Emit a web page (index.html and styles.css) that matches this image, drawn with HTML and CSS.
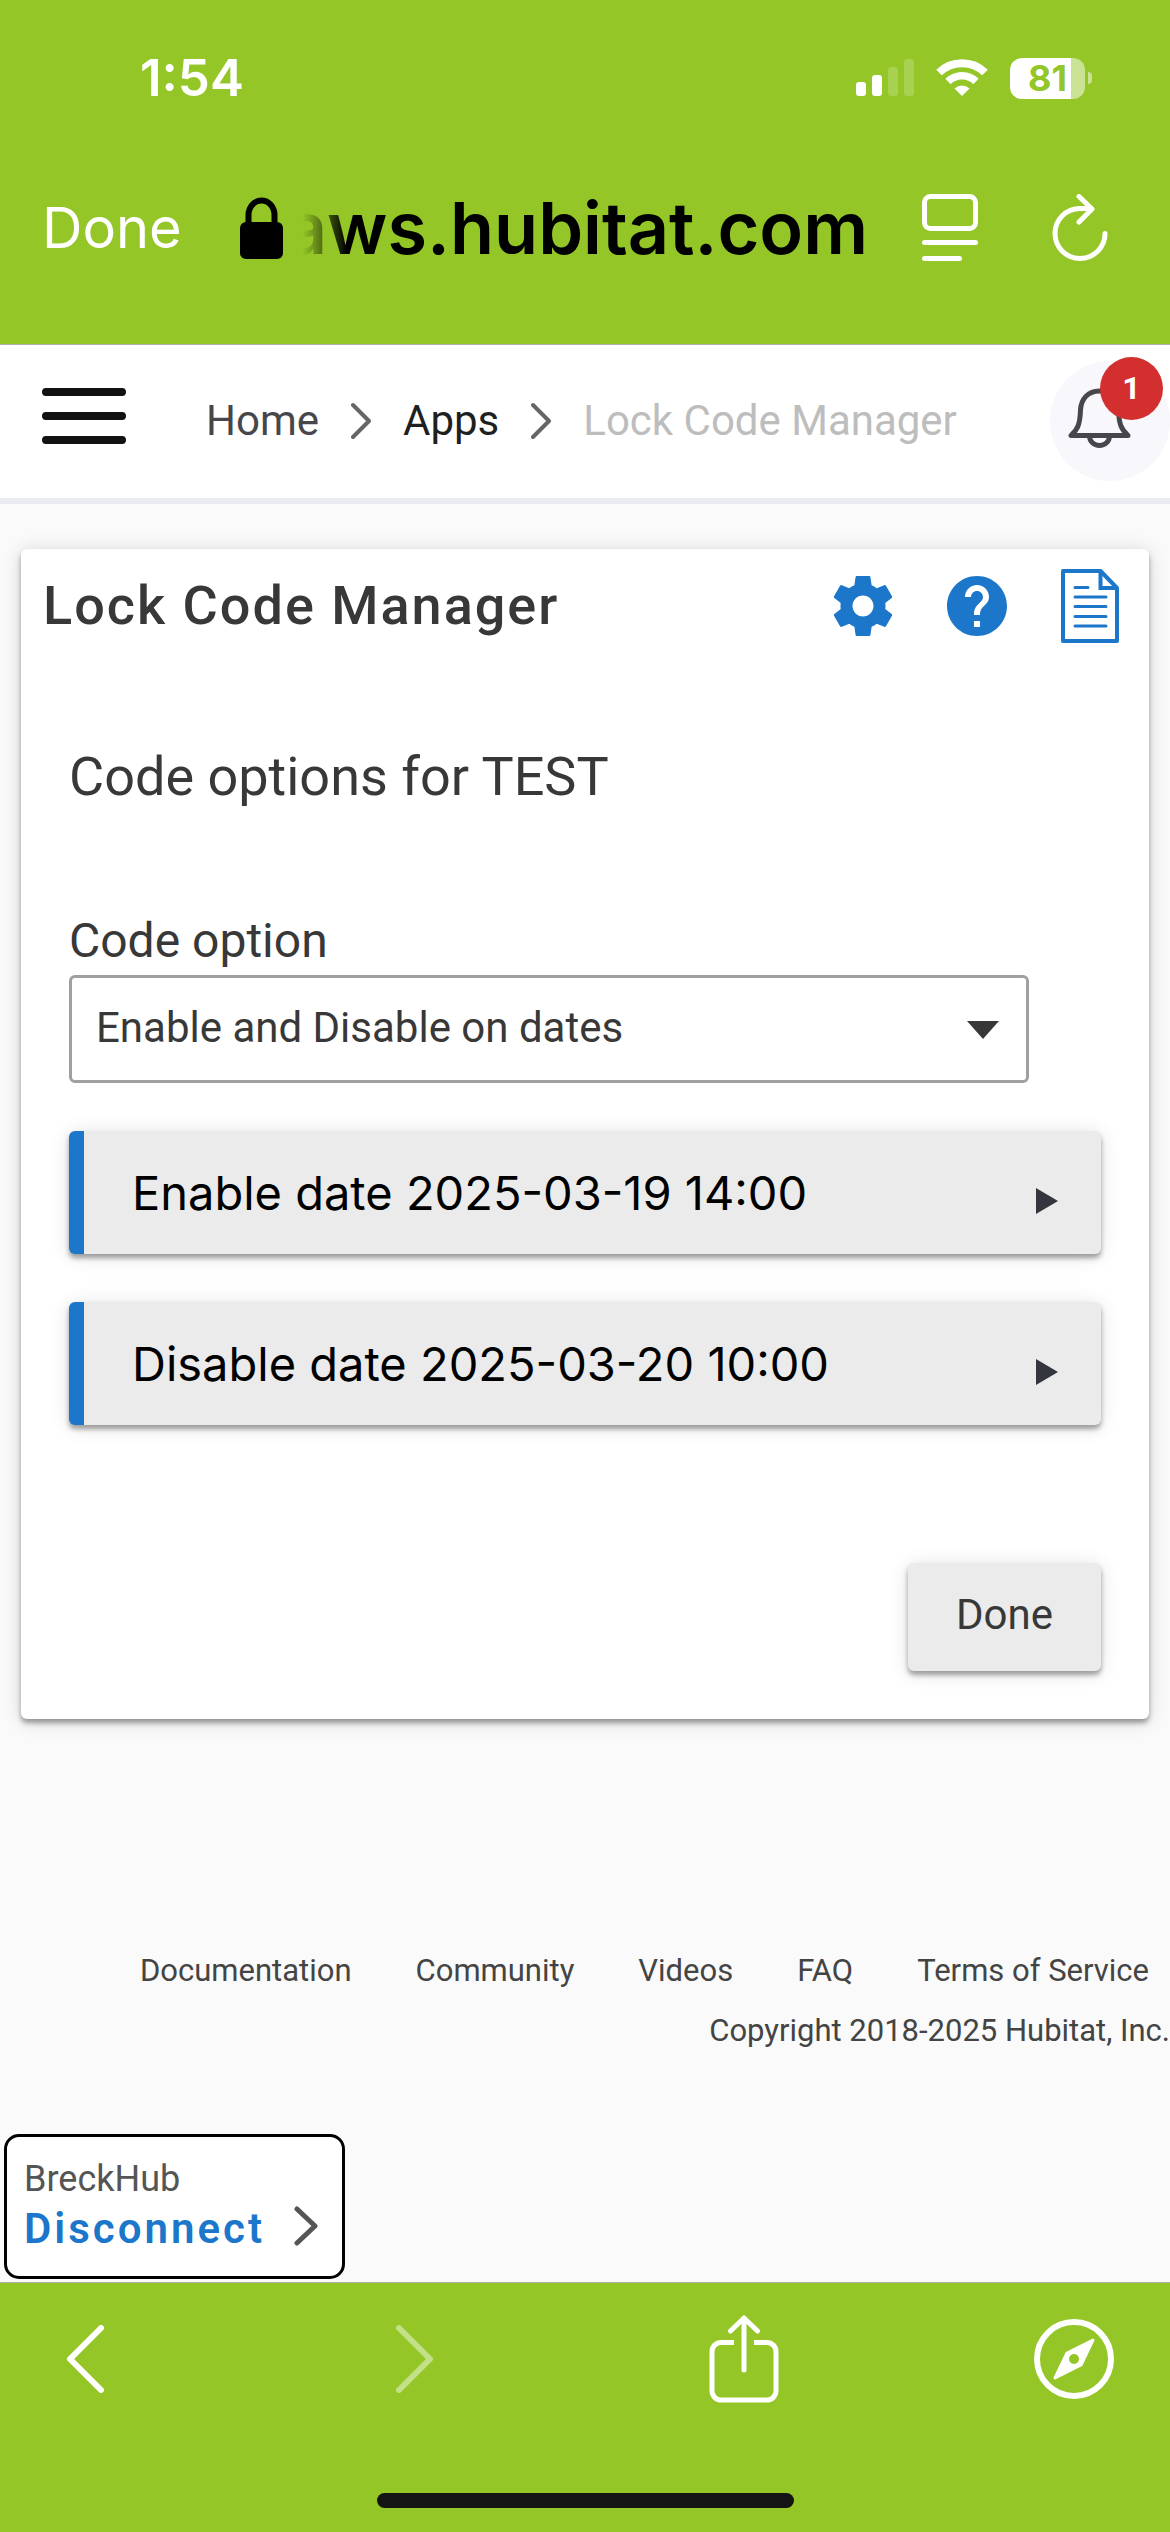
FILE: index.html
```html
<!DOCTYPE html>
<html lang="en">
<head>
    <meta charset="UTF-8">
    <meta name="viewport" content="width=device-width, initial-scale=1.0">
    <title>Lock Code Manager</title>
    <link rel="stylesheet" href="styles.css">
</head>
<body>
    <header class="browser-top">
        <div class="status-bar">
            <span class="time">1:54</span>
            <div class="status-icons">
                <svg width="58" height="38" viewBox="0 0 58 38" fill="#fff">
                    <rect x="0" y="23" width="10" height="14" rx="3"/>
                    <rect x="16" y="16" width="10" height="21" rx="3"/>
                    <rect x="32" y="8" width="10" height="29" rx="3" opacity=".2"/>
                    <rect x="48" y="0" width="10" height="37" rx="3" opacity=".2"/>
                </svg>
                <svg width="52" height="38" viewBox="0 0 52 38" fill="none" stroke="#fff">
                    <path d="M3 13.500a33 33 0 0 1 46 0" stroke-width="8"/>
                    <path d="M12 22.500a20 20 0 0 1 28 0" stroke-width="7.500"/>
                    <path d="M18.500 29.500a11 11 0 0 1 15 0L26 37z" fill="#fff" stroke="none"/>
                </svg>
                <div class="battery">81</div>
            </div>
        </div>
        <div class="address-bar">
            <button class="done-link">Done</button>
            <svg class="lock" width="43" height="62" viewBox="0 0 43 62">
                <rect x="0" y="25" width="43" height="37" rx="6"/>
                <path d="M8.500 28V18a13 14.500 0 0 1 26 0v10" fill="none" stroke="#000" stroke-width="6"/>
            </svg>
            <div class="url"><span>aws.hubitat.com</span></div>
            <button class="icon-btn" aria-label="Reader">
                <svg width="56" height="68" viewBox="0 0 56 68" fill="none" stroke="#fff" stroke-width="5" stroke-linecap="round">
                    <rect x="2.500" y="2.500" width="51" height="32" rx="6"/>
                    <path d="M2.500 48.500h51M2.500 64.500h35"/>
                </svg>
            </button>
            <button class="icon-btn" aria-label="Reload">
                <svg width="56" height="68" viewBox="0 0 56 68" fill="none" stroke="#fff" stroke-width="5" stroke-linecap="round" stroke-linejoin="round">
                    <path d="M53 39.500A25 25 0 1 1 28 14.500H39"/>
                    <path d="M27 2.500l13 12.500-13 13"/>
                </svg>
            </button>
        </div>
    </header>

    <nav class="navbar">
        <button class="menu-btn" aria-label="Menu">
            <span></span>
            <span></span>
            <span></span>
        </button>
        <div class="breadcrumb">
            <a href="#" class="crumb">Home</a>
            <svg width="20" height="38" viewBox="0 0 20 38" fill="none" stroke="#666" stroke-width="4" stroke-linecap="round" stroke-linejoin="round"><path d="M2 3l16 16L2 35"/></svg>
            <a href="#" class="crumb crumb-apps">Apps</a>
            <svg width="20" height="38" viewBox="0 0 20 38" fill="none" stroke="#666" stroke-width="4" stroke-linecap="round" stroke-linejoin="round"><path d="M2 3l16 16L2 35"/></svg>
            <span class="crumb crumb-current">Lock Code Manager</span>
        </div>
        <button class="bell" aria-label="Notifications">
            <svg width="63" height="60" viewBox="0 0 63 60" fill="none" stroke="#47474b" stroke-width="5" stroke-linejoin="round">
                <path d="M31.500 3C20 3 13 11 12.500 22 12 36 10 41 3 47.500H60C53 41 51 36 50.500 22 50 11 43 3 31.500 3z"/>
                <path d="M21.500 48a10 9.500 0 0 0 20 0"/>
            </svg>
            <span class="badge">1</span>
        </button>
    </nav>

    <main class="content">
        <section class="card">
            <div class="card-header">
                <h1>Lock Code Manager</h1>
                <div class="card-icons">
                    <a href="#" aria-label="Settings">
                        <svg width="60" height="60" viewBox="2 2 20 20" fill="#1c77cb"><path d="M19.430 12.980c.040-.320.070-.640.070-.980s-.030-.660-.070-.980l2.110-1.650c.190-.150.240-.420.120-.640l-2-3.460c-.120-.220-.390-.300-.610-.220l-2.490 1c-.520-.400-1.080-.730-1.690-.980l-.380-2.650C14.460 2.180 14.250 2 14 2h-4c-.250 0-.460.180-.490.420l-.380 2.650c-.610.250-1.170.590-1.690.980l-2.490-1c-.230-.090-.490 0-.610.220l-2 3.460c-.130.220-.070.490.120.640l2.110 1.650c-.040.320-.070.650-.070.980s.030.660.070.980l-2.110 1.650c-.190.150-.240.420-.120.640l2 3.460c.120.220.390.300.610.220l2.490-1c.520.400 1.080.730 1.690.980l.380 2.650c.030.240.240.420.490.420h4c.250 0 .460-.180.490-.420l.380-2.650c.610-.250 1.170-.590 1.690-.980l2.490 1c.230.090.490 0 .610-.220l2-3.460c.120-.220.070-.490-.120-.640l-2.110-1.650zM12 15.500c-1.930 0-3.500-1.570-3.500-3.500s1.570-3.500 3.500-3.500 3.500 1.570 3.500 3.500-1.570 3.500-3.500 3.500z"/></svg>
                    </a>
                    <a href="#" aria-label="Help">
                        <svg width="60" height="60" viewBox="2 2 20 20" fill="#1c77cb"><path d="M12 2C6.480 2 2 6.480 2 12s4.480 10 10 10 10-4.480 10-10S17.520 2 12 2zm1 17h-2v-2h2v2zm2.070-7.750l-.900.920C13.450 12.900 13 13.500 13 15h-2v-.500c0-1.100.450-2.100 1.170-2.830l1.240-1.260c.370-.360.590-.860.590-1.410 0-1.100-.900-2-2-2s-2 .900-2 2H8c0-2.210 1.790-4 4-4s4 1.790 4 4c0 .880-.360 1.680-.930 2.250z"/></svg>
                    </a>
                    <a href="#" aria-label="Logs">
                        <svg width="58" height="74" viewBox="0 0 58 74" fill="none" stroke="#1c77cb">
                            <path d="M2 2h37.500L56 19v53H2z" stroke-width="4" stroke-linejoin="round"/>
                            <path d="M39.500 2v17H56" stroke-width="4"/>
                            <path d="M14 18.500h13M14 28h31M14 37.500h31M14 47.500h31M14 57h31" stroke-width="3" stroke-linecap="round"/>
                        </svg>
                    </a>
                </div>
            </div>

            <form class="card-body">
                <h2>Code options for TEST</h2>
                <label for="code_option">Code option</label>
                <div class="select-wrap">
                    <select id="code_option" name="code_option">
                        <option>Enable and Disable on dates</option>
                    </select>
                </div>
                <button type="button" class="date-btn">Enable date 2025-03-19 14:00</button>
                <button type="button" class="date-btn">Disable date 2025-03-20 10:00</button>
                <button type="submit" class="btn-done">Done</button>
            </form>
        </section>

        <footer class="footer">
            <div class="footer-links">
                <a href="#">Documentation</a>
                <a href="#">Community</a>
                <a href="#">Videos</a>
                <a href="#">FAQ</a>
                <a href="#">Terms of Service</a>
            </div>
            <p>Copyright 2018-2025 Hubitat, Inc.</p>
        </footer>

        <div class="hub-box">
            <div>
                <span class="hub-name">BreckHub</span>
                <a href="#" class="disconnect">Disconnect</a>
            </div>
            <svg width="24" height="40" viewBox="0 0 24 40" fill="none" stroke="#555" stroke-width="5" stroke-linecap="round" stroke-linejoin="round"><path d="M3 3l18 17L3 37"/></svg>
        </div>
    </main>

    <div class="browser-bottom">
        <div class="toolbar">
            <button aria-label="Back">
                <svg width="38" height="68" viewBox="0 0 38 68" fill="none" stroke="#fff" stroke-width="6" stroke-linecap="round" stroke-linejoin="round"><path d="M35 3L4 34l31 31"/></svg>
            </button>
            <button aria-label="Forward" disabled>
                <svg width="38" height="68" viewBox="0 0 38 68" fill="none" stroke="#c4e087" stroke-width="6" stroke-linecap="round" stroke-linejoin="round"><path d="M3 3l31 31L3 65"/></svg>
            </button>
            <button aria-label="Share">
                <svg width="70" height="88" viewBox="0 0 70 88" fill="none" stroke="#fff" stroke-width="5" stroke-linejoin="round">
                    <path d="M25 27.500H12a9 9 0 0 0-9 9V76a9 9 0 0 0 9 9h46a9 9 0 0 0 9-9V36.500a9 9 0 0 0-9-9H45"/>
                    <path d="M35 55V3M21.500 16L35 3l13.500 13" stroke-linecap="round"/>
                </svg>
            </button>
            <button aria-label="Open in browser">
                <svg width="80" height="80" viewBox="0 0 80 80">
                    <circle cx="40" cy="40" r="37" fill="none" stroke="#fff" stroke-width="6"/>
                    <path d="M59 21L33 34 21 59 47 46z" fill="#fff" stroke="#fff" stroke-width="3" stroke-linejoin="round"/>
                    <circle cx="40" cy="40" r="5" fill="#93c626"/>
                </svg>
            </button>
        </div>
        <div class="home-indicator"></div>
    </div>
</body>
</html>
```
FILE: styles.css
```css
* {
    box-sizing: border-box;
}

body {
    display: flex;
    flex-direction: column;
    min-height: 100vh;
    margin: 0;
    background-color: #fafafa;
    color: #383838;
    font-family: Roboto, sans-serif;
    font-size: 42px;
}

button {
    padding: 0;
    border: none;
    background: none;
    font-family: inherit;
    cursor: pointer;
}

a {
    color: inherit;
    text-decoration: none;
}

svg {
    display: block;
    flex-shrink: 0;
}

/* Browser top */
.browser-top {
    background-color: #93c626;
    border-bottom: 1px solid #b0b0b0;
    font-family: Inter, sans-serif;
}

.status-bar {
    display: flex;
    justify-content: space-between;
    align-items: center;
    padding: 48px 78px 0 140px;
    color: #fff;
}

.time {
    font-size: 51px;
    line-height: 60px;
    font-weight: 600;
}

.status-icons {
    display: flex;
    align-items: center;
    gap: 22px;
}

.battery {
    position: relative;
    width: 75px;
    height: 41px;
    margin-right: 7px;
    border-radius: 12px;
    background: linear-gradient(to right, #fff 82%, #c9e293 82%);
    color: #93c626;
    font-size: 36px;
    line-height: 41px;
    font-weight: 700;
    text-align: center;
}

.battery::after {
    content: "";
    position: absolute;
    right: -7px;
    top: 14px;
    width: 4px;
    height: 12px;
    border-radius: 0 6px 6px 0;
    background-color: #c9e293;
}

.address-bar {
    display: flex;
    align-items: center;
    padding: 86px 62px 82px 42px;
}

.done-link {
    color: #fff;
    font-size: 56px;
    line-height: 68px;
}

.lock {
    margin-left: 58px;
}

.url {
    display: flex;
    justify-content: flex-end;
    flex: 1;
    margin: -9px 54px -9px 20px;
    overflow: hidden;
    color: #000;
    font-size: 72px;
    line-height: 86px;
    font-weight: 600;
    white-space: nowrap;
    -webkit-mask-image: linear-gradient(to right, transparent, #000 44px);
    mask-image: linear-gradient(to right, transparent, #000 44px);
}

.icon-btn + .icon-btn {
    margin-left: 74px;
}

/* Nav */
.navbar {
    display: flex;
    align-items: center;
    padding: 16px 0 17px 42px;
    background-color: #fff;
    border-bottom: 6px solid #eaecf2;
}

.menu-btn {
    display: flex;
    flex-direction: column;
    gap: 16px;
    width: 84px;
    margin-bottom: 10px;
}

.menu-btn span {
    height: 8px;
    border-radius: 4px;
    background-color: #121212;
}

.breadcrumb {
    display: flex;
    align-items: center;
    flex: 1;
    gap: 32px;
    margin-left: 80px;
}

.crumb {
    color: #47474b;
    line-height: 50px;
}

.crumb-apps {
    color: #1f1f1f;
}

.crumb-current {
    color: #bdbdbd;
}

.bell {
    position: relative;
    width: 120px;
    height: 120px;
    padding: 0 0 6px 18px;
    border-radius: 50%;
    background-color: #f7f7fc;
}

.badge {
    position: absolute;
    top: -4px;
    right: 7px;
    width: 63px;
    height: 63px;
    border-radius: 50%;
    background-color: #d32f2f;
    color: #fff;
    font-size: 32px;
    line-height: 63px;
    font-weight: 700;
    text-align: center;
}

/* Card */
.content {
    display: flex;
    flex-direction: column;
    flex: 1;
    padding: 45px 0 3px;
}

.card {
    margin: 0 21px;
    border-radius: 6px;
    background-color: #fff;
    box-shadow: 0 4px 5px rgba(0, 0, 0, 0.35), 0 2px 20px rgba(0, 0, 0, 0.15);
}

.card-header {
    display: flex;
    justify-content: space-between;
    align-items: center;
    padding: 20px 30px 0 22px;
}

h1 {
    margin: 0;
    font-size: 54px;
    line-height: 64px;
    font-weight: 500;
    letter-spacing: 2px;
}

.card-icons {
    display: flex;
    align-items: center;
    gap: 54px;
}

.card-body {
    display: flex;
    flex-direction: column;
    padding: 102px 48px 48px;
}

h2 {
    margin: 0 0 100px;
    font-size: 54px;
    line-height: 64px;
    font-weight: 400;
}

label {
    font-size: 48px;
    line-height: 64px;
}

.select-wrap {
    position: relative;
    margin: 2px 72px 48px 0;
}

.select-wrap::after {
    content: "";
    position: absolute;
    right: 30px;
    top: 46px;
    border: 16px solid transparent;
    border-top: 18px solid #383838;
    border-bottom: none;
    pointer-events: none;
}

select {
    width: 100%;
    height: 108px;
    padding: 0 80px 4px 24px;
    border: 3px solid #a0a0a0;
    border-radius: 6px;
    background-color: #fff;
    color: #383838;
    font-family: inherit;
    font-size: 42px;
    -webkit-appearance: none;
    appearance: none;
}

.date-btn {
    display: flex;
    justify-content: space-between;
    align-items: center;
    margin-bottom: 48px;
    padding: 33px 43px 32px 48px;
    border-left: 15px solid #1c77cb;
    border-radius: 6px;
    background-color: #ebebeb;
    box-shadow: 0 4px 5px rgba(0, 0, 0, 0.35), 0 2px 20px rgba(0, 0, 0, 0.12);
    color: #000;
    font-family: Inter, sans-serif;
    font-size: 47px;
    line-height: 58px;
}

.date-btn::after {
    content: "";
    margin-top: 16px;
    border: 13px solid transparent;
    border-left: 22px solid #33373d;
    border-right: none;
}

.btn-done {
    align-self: flex-end;
    margin-top: 90px;
    padding: 27px 48px 31px;
    border-radius: 6px;
    background-color: #ebebeb;
    box-shadow: 0 4px 5px rgba(0, 0, 0, 0.35), 0 2px 20px rgba(0, 0, 0, 0.12);
    color: #383838;
    font-size: 42px;
    line-height: 50px;
}

/* Footer */
.footer {
    margin-top: 222px;
    color: #444;
    font-size: 31px;
    line-height: 60px;
    text-align: right;
}

.footer-links {
    display: flex;
    justify-content: flex-end;
    gap: 64px;
    padding-right: 21px;
}

.footer p {
    margin: 0;
}

.hub-box {
    display: flex;
    align-self: flex-start;
    align-items: flex-end;
    gap: 29px;
    margin: auto 0 0 4px;
    padding: 17px 24px 22px 17px;
    border: 3px solid #000;
    border-radius: 15px;
    background-color: #fff;
}

.hub-box svg {
    margin-bottom: 8px;
}

.hub-name {
    display: block;
    color: #555;
    font-size: 36px;
    line-height: 50px;
}

.disconnect {
    display: block;
    color: #1c77cb;
    font-size: 42px;
    line-height: 50px;
    font-weight: 600;
    letter-spacing: 3px;
}

/* Browser bottom */
.browser-bottom {
    padding: 32px 0 24px;
    border-top: 1px solid #b0b0b0;
    background-color: #93c626;
}

.toolbar {
    display: flex;
    justify-content: space-between;
    align-items: center;
    padding: 0 56px 0 45px;
}

.toolbar button {
    display: flex;
    justify-content: center;
    width: 80px;
}

.home-indicator {
    width: 417px;
    height: 15px;
    margin: 90px auto 0;
    border-radius: 8px;
    background-color: #141414;
}
```
